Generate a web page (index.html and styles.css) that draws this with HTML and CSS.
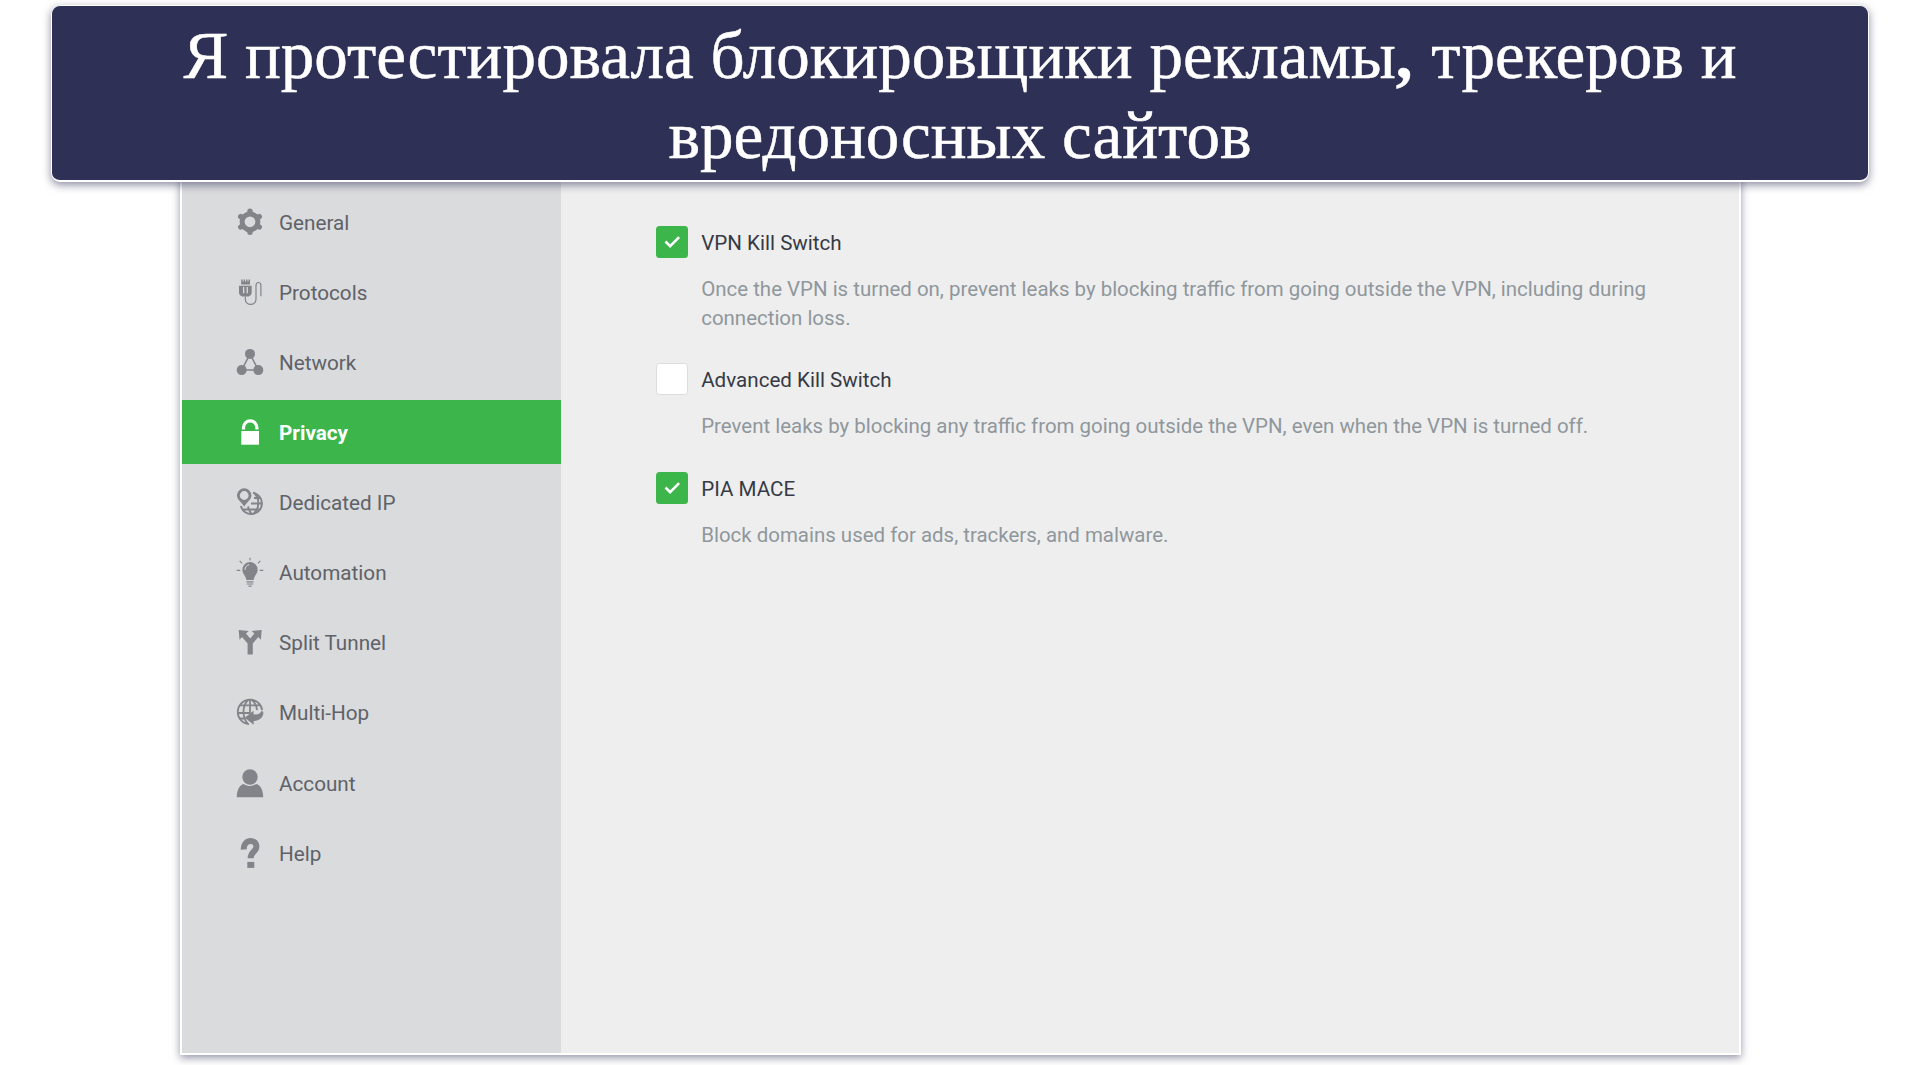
FILE: index.html
```
<!DOCTYPE html>
<html lang="ru">
<head>
<meta charset="utf-8">
<title>PIA MACE</title>
<link rel="stylesheet" href="styles.css">
</head>
<body>
<h1 class="banner">Я протестировала блокировщики рекламы<span class="comma">,</span> трекеров и<br>вредоносных сайтов</h1>
<main class="window">
  <nav class="sidebar">
    <a class="item"><svg class="icon" viewBox="0 0 32 32"><circle class="line" cx="16" cy="15.800" r="7.900" stroke-width="5"/><path class="line" stroke-width="5.400" stroke-linecap="round" d="M16 5.300v2M16 24.300v2M6.700 10.600l2 1.100M23.300 19.900l2 1.100M25.300 10.600l-2 1.100M8.700 19.900l-2 1.100"/></svg><span>General</span></a>
    <a class="item"><svg class="icon" viewBox="0 0 32 32"><path fill-rule="evenodd" d="M7.200 3.400h1.500v2h1v-2h1.400v2h1v-2h1.400v2h1v-2H16v5H7.200zM5 9.700h12.700v7.200q0 2.200-3 3.700H8q-3-1.500-3-3.700zM9 11v6.300h1.300V11zM12.600 11v6.300h1.300V11z"/><path class="line" stroke-width="1.200" d="M11.300 20.500v2.500c0 7.200 10.700 7.200 10.700 0V9.500c0-4 4.900-4 4.900 0V20.300"/></svg><span>Protocols</span></a>
    <a class="item"><svg class="icon" viewBox="0 0 32 32"><path class="line" stroke-width="1.500" d="M16 7.800L7.700 24.100h16.600z"/><circle cx="16" cy="7.900" r="5"/><circle cx="7.700" cy="24.100" r="5"/><circle cx="24.300" cy="24.100" r="5"/></svg><span>Network</span></a>
    <a class="item active"><svg class="icon" viewBox="0 0 32 32"><path d="M7.300 15h17.700v13.700H7.300z"/><path class="line" stroke-width="3.200" d="M9.500 13.600v-2.100a6.700 6.700 0 0 1 13.400 0V13.600"/></svg><span>Privacy</span></a>
    <a class="item"><svg class="icon" viewBox="0 0 32 32"><path class="line" stroke-width="1.900" d="M19 6.800a10.700 10.700 0 1 1-12.100 13.200M20 6.900c6 6 6 15.300-1 21.300M20 12h7.200M17 17.500h11.400M8 23.500h18.500M14 20.500q1 4.500 4 8"/><path fill-rule="evenodd" d="M10.200 2.300a7.200 7.200 0 0 0-7.200 7.300c0 4.400 4.800 6.700 7.200 11.200 2.400-4.500 7.200-6.800 7.200-11.200a7.200 7.200 0 0 0-7.200-7.300zm0 2.800a4.400 4.400 0 1 1 0 8.800a4.400 4.400 0 1 1 0-8.800z"/></svg><span>Dedicated IP</span></a>
    <a class="item"><svg class="icon" viewBox="0 0 32 32"><path d="M16 6a7.600 7.600 0 0 0-7.600 7.700c0 4.200 3.400 5.800 4 10.300h7.200c.6-4.500 4-6.100 4-10.300A7.600 7.600 0 0 0 16 6z"/><path class="glint" d="M11 14c0-3 1.700-4.800 4.200-5.300"/><path class="line" stroke-width="1.100" d="M12.400 25.900h7.200M12.700 28h6.600M14.500 30.100h3M2.700 14.400h3.500M25.800 14.400h3.500M16 1.700v2.700M5.700 4.900l2.400 2.400M26.300 4.900l-2.400 2.400"/></svg><span>Automation</span></a>
    <a class="item"><svg class="icon" viewBox="0 0 32 32"><path d="M4.700 4l10 .9-2.700 2.700 4.200 5 4.200-5-2.700-2.700 10-.9-.8 9.700-2.600-2.700-5.500 6.400v11.200h-5.200V17.400L8 11l-2.500 2.700z"/></svg><span>Split Tunnel</span></a>
    <a class="item"><svg class="icon" viewBox="0 0 32 32"><path class="line" stroke-width="1.800" d="M28.200 14A12.300 12.300 0 1 0 15 28.200M16 4v13M6 9.300h20M4 17h12M5.500 22.500H11M14 4c-6 6-6 17.500 0 24M18 4q4.500 4 5 10"/><path d="M10.700 21.700l8.800-7v3.500c4.500.8 7.300-.8 8.400-3.700l1.400 1.700c.6 5-3.800 8.800-9.600 8.800v3.800z"/></svg><span>Multi-Hop</span></a>
    <a class="item"><svg class="icon" viewBox="0 0 32 32"><circle cx="16" cy="10" r="7.700"/><path d="M2.800 30.200c0-7 2.600-12.200 7-13.300 4 2.700 8.400 2.700 12.400 0 4.400 1.100 7 6.300 7 13.300z"/></svg><span>Account</span></a>
    <a class="item"><svg class="icon" viewBox="0 0 32 32"><path class="line" stroke-width="6" d="M9.800 12.500C9.300 1.800 22.400 1.800 22.400 9.500c0 5.500-5.700 4.500-5.700 11.700"/><path d="M13.300 24.900h7v6h-7z"/></svg><span>Help</span></a>
  </nav>
  <section class="settings">
    <div class="setting">
      <i class="check on"><svg viewBox="0 0 32 32"><path d="M9.500 15.500l4.600 4.600 9-9"/></svg></i>
      <div class="copy"><h2>VPN Kill Switch</h2><p>Once the VPN is turned on, prevent leaks by blocking traffic from going outside the VPN, including during<br>connection loss.</p></div>
    </div>
    <div class="setting">
      <i class="check"></i>
      <div class="copy"><h2>Advanced Kill Switch</h2><p>Prevent leaks by blocking any traffic from going outside the VPN, even when the VPN is turned off.</p></div>
    </div>
    <div class="setting">
      <i class="check on"><svg viewBox="0 0 32 32"><path d="M9.500 15.500l4.600 4.600 9-9"/></svg></i>
      <div class="copy"><h2>PIA MACE</h2><p>Block domains used for ads, trackers, and malware.</p></div>
    </div>
  </section>
</main>
</body>
</html>
```
FILE: styles.css
```
* { box-sizing: border-box; }
body {
  margin: 0;
  height: 1065px;
  overflow: hidden;
  display: flex;
  flex-direction: column;
  background: #fff;
  font-family: Roboto, sans-serif;
}
.banner {
  position: relative;
  z-index: 1;
  flex: none;
  width: 1818px;
  height: 177px;
  margin: 5px 0 0 51px;
  padding-top: 9px;
  border: 1px solid #fff;
  border-bottom-width: 2px;
  border-radius: 9px;
  background: #2f3056;
  box-shadow: 0 3px 8px rgba(47, 48, 86, .55);
  color: #fff;
  font: 400 67px/80px "Liberation Serif", serif;
  -webkit-text-stroke: .5px #fff;
  text-align: center;
  white-space: nowrap;
}
.comma { font-weight: 700; letter-spacing: 2px; }
.window {
  flex: none;
  display: flex;
  width: 1561px;
  height: 881px;
  margin: -8px 0 0 180px;
  border: 2px solid #fff;
  background: #eee;
  box-shadow: 0 3px 8px rgba(47, 48, 86, .5);
}
.sidebar {
  flex: none;
  display: flex;
  flex-direction: column;
  gap: 6.14px;
  width: 379px;
  padding-top: 13.6px;
  background: #d9dbdd;
}
.item {
  display: flex;
  align-items: center;
  gap: 13px;
  height: 64px;
  padding-left: 52px;
  color: #5f6268;
  fill: #838489;
  font-size: 20.7px;
  line-height: 28px;
}
.item span { padding-top: 2px; }
.item.active {
  background: #3cb54a;
  color: #fff;
  fill: #fff;
  font-weight: 700;
}
.icon { width: 32px; height: 32px; }
.icon .line { fill: none; stroke: #838489; }
.active .icon .line { stroke: #fff; }
.icon .glint { fill: none; stroke: #d9dbdd; stroke-width: 1; }
.settings {
  display: flex;
  flex-direction: column;
  gap: 31px;
  padding: 50px 0 0 95px;
}
.setting { display: flex; gap: 13.2px; }
.check {
  flex: none;
  width: 32px;
  height: 32px;
  border: 1px solid #dcdcdc;
  border-radius: 3.5px;
  background: #fff;
}
.check.on { border: 0; background: #3cb54a; }
.check svg { display: block; width: 32px; height: 32px; fill: none; stroke: #fff; stroke-width: 2.6; }
h2 {
  margin: 0;
  padding-top: 3px;
  color: #363a45;
  font-size: 20.6px;
  font-weight: 400;
  line-height: 29px;
}
p {
  margin: 17px 0 0;
  color: #8f979c;
  font-size: 20.47px;
  line-height: 28.6px;
}
h2, p, .item span { white-space: nowrap; }
```
